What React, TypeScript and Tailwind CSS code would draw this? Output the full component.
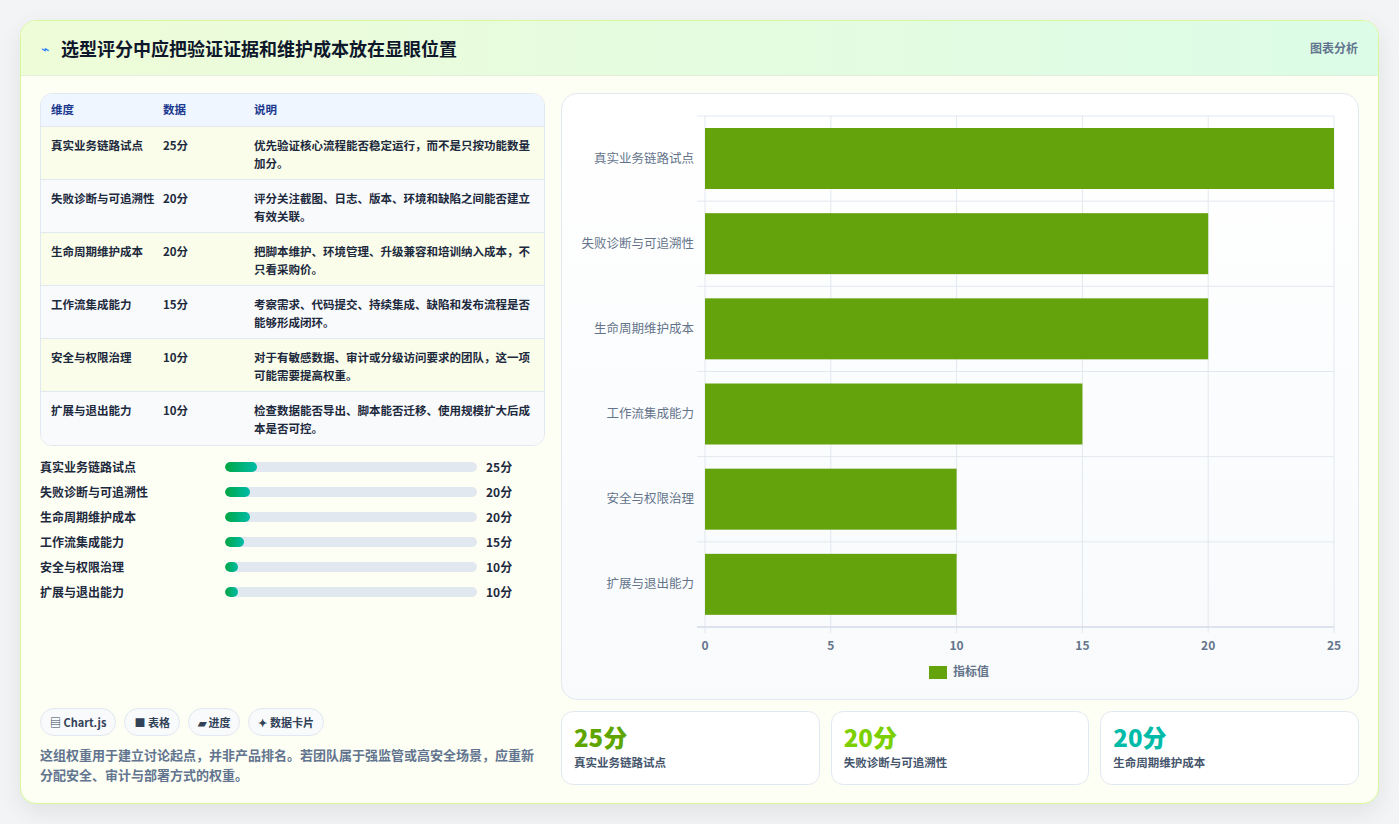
import React from "react";

const rows = [
  ["真实业务链路试点", 25, "优先验证核心流程能否稳定运行，而不是只按功能数量加分。"],
  ["失败诊断与可追溯性", 20, "评分关注截图、日志、版本、环境和缺陷之间能否建立有效关联。"],
  ["生命周期维护成本", 20, "把脚本维护、环境管理、升级兼容和培训纳入成本，不只看采购价。"],
  ["工作流集成能力", 15, "考察需求、代码提交、持续集成、缺陷和发布流程是否能够形成闭环。"],
  ["安全与权限治理", 10, "对于有敏感数据、审计或分级访问要求的团队，这一项可能需要提高权重。"],
  ["扩展与退出能力", 10, "检查数据能否导出、脚本能否迁移、使用规模扩大后成本是否可控。"],
] as const;

function Chart() {
  const L = 143, R = 772, T = 22, B = 533;
  const band = (B - T) / 6;
  const sx = (v: number) => L + ((R - L) * v) / 25;
  return (
    <svg width="796" height="607" className="block">
      {[0, 5, 10, 15, 20, 25].map((t) => (
        <g key={t}>
          <line x1={sx(t)} x2={sx(t)} y1={T} y2={B + 6} stroke="#e2e8f0" />
          <text x={sx(t)} y={556} textAnchor="middle" fontSize="12" fill="#64748b" fontWeight="600">{t}</text>
        </g>
      ))}
      {[0, 1, 2, 3, 4, 5, 6].map((i) => (
        <line key={i} x1={L - 8} x2={R} y1={T + band * i} y2={T + band * i} stroke="#e2e8f0" />
      ))}
      <line x1={L - 8} x2={R} y1={B} y2={B} stroke="#cbd5e1" />
      {rows.map(([n, v], i) => (
        <g key={n}>
          <rect x={L} y={T + band * i + 12} width={sx(v) - L} height={61} fill="#65a30d" />
          <text x={L - 11} y={T + band * i + band / 2 + 4} textAnchor="end" fontSize="12.5" fill="#64748b">{n}</text>
        </g>
      ))}
      <rect x={367} y={572} width={18} height={13} fill="#65a30d" />
      <text x={391} y={582} fontSize="12" fill="#64748b" fontWeight="600">指标值</text>
    </svg>
  );
}

export default function App() {
  return (
    <div className="w-[1399px] h-[824px] bg-[#f3f4f6] p-5 pt-5" style={{ fontFamily: '"Noto Sans CJK SC", "Noto Sans", sans-serif' }}>
      <div className="w-[1359px] h-[784px] rounded-2xl border border-lime-200 bg-[#fdfff5] shadow-[0_8px_24px_rgba(0,0,0,0.08)] overflow-hidden flex flex-col">
        <div className="h-[55px] shrink-0 flex items-center justify-between px-5 bg-gradient-to-r from-[#eefcd8] to-[#dcfce7] border-b border-[#e2f0d9]">
          <div className="flex items-center gap-3">
            <span className="text-blue-500 text-sm">⌁</span>
            <span className="text-[18px] font-bold text-slate-900">选型评分中应把验证证据和维护成本放在显眼位置</span>
          </div>
          <span className="text-[12px] font-bold text-slate-500">图表分析</span>
        </div>
        <div className="flex-1 flex gap-4 px-[19px] pt-[17px] pb-[18px]">
          <div className="w-[510px] flex flex-col">
            <div className="rounded-xl border border-slate-200 overflow-hidden bg-white">
              <div className="h-[33px] flex items-center text-[11.5px] font-bold text-blue-900 bg-[#eff6ff] border-b border-slate-200">
                <div className="w-[122px] pl-[10px]">维度</div>
                <div className="w-[91px]">数据</div>
                <div>说明</div>
              </div>
              {rows.map(([n, v, d], i) => (
                <div key={n} className={`h-[53px] flex text-[11.5px] font-semibold text-slate-800 pt-[9px] leading-[18px] ${i < 5 ? "border-b border-slate-200" : ""} ${i % 2 === 0 ? "bg-[#f9fde9]" : "bg-[#f8fafc]"}`}>
                  <div className="w-[122px] pl-[10px] pr-2">{n}</div>
                  <div className="w-[91px]">{v}分</div>
                  <div className="flex-1 pr-2">{d}</div>
                </div>
              ))}
            </div>
            <div className="mt-[12px] flex flex-col gap-[7px]">
              {rows.map(([n, v]) => (
                <div key={n} className="h-[18px] flex items-center text-[12px] font-semibold text-slate-800">
                  <div className="w-[185px]">{n}</div>
                  <div className="w-[252px] h-[10px] rounded-full bg-slate-200 overflow-hidden">
                    <div className="h-full rounded-full bg-gradient-to-r from-green-600 to-teal-500" style={{ width: `${v / 2}%` }} />
                  </div>
                  <div className="ml-[9px] font-bold">{v}分</div>
                </div>
              ))}
            </div>
            <div className="flex-1" />
            <div className="flex gap-2 text-[11px] font-bold text-slate-700">
              {["▤ Chart.js", "■ 表格", "▰ 进度", "✦ 数据卡片"].map((t) => (
                <span key={t} className="h-[28px] px-[9px] flex items-center rounded-full border border-slate-200 bg-[#f8fafc]">{t}</span>
              ))}
            </div>
            <p className="mt-[9px] text-[13px] leading-[20px] font-semibold text-slate-500">这组权重用于建立讨论起点，并非产品排名。若团队属于强监管或高安全场景，应重新分配安全、审计与部署方式的权重。</p>
          </div>
          <div className="flex-1 flex flex-col gap-[11px]">
            <div className="h-[607px] rounded-2xl border border-slate-200 bg-gradient-to-b from-white to-[#f8fafc] overflow-hidden">
              <Chart />
            </div>
            <div className="grid grid-cols-3 gap-[11px]">
              {[["25分", "真实业务链路试点", "text-lime-600"], ["20分", "失败诊断与可追溯性", "text-lime-500"], ["20分", "生命周期维护成本", "text-teal-500"]].map(([v, n, c]) => (
                <div key={n} className="h-[74px] rounded-xl border border-slate-200 bg-white px-3 pt-[10px]">
                  <div className={`text-[24px] leading-[30px] font-extrabold ${c}`}>{v}</div>
                  <div className="text-[11.5px] font-semibold text-slate-600 mt-[2px]">{n}</div>
                </div>
              ))}
            </div>
          </div>
        </div>
      </div>
    </div>
  );
}
